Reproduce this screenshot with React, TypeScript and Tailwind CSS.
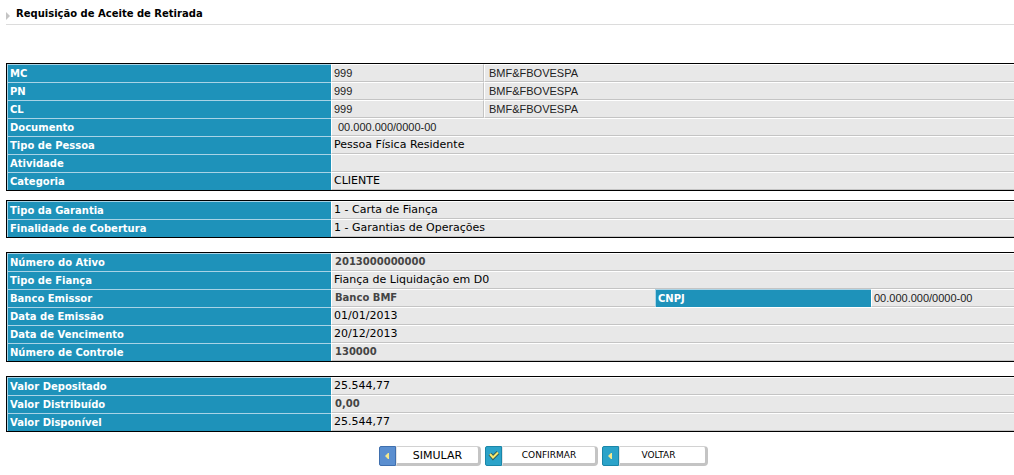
import type { ReactNode } from 'react';

type Tone = 'default' | 'masked' | 'maskedIndent' | 'maskedBold';

interface Field {
  label: string;
  value?: string;
  tone?: Tone;
}

const toneStyles: Record<Tone, string> = {
  default: 'px-[2px] text-[11px] text-black',
  masked: 'px-[2px] font-["Liberation_Sans",Arial,sans-serif] text-[11px] text-[#222]',
  maskedIndent: 'px-1.5 font-["Liberation_Sans",Arial,sans-serif] text-[11px] text-[#222]',
  maskedBold: 'px-[3px] text-[10px] font-bold text-[#444]',
};

const participants = [
  { label: 'MC', code: '999', name: 'BMF&FBOVESPA' },
  { label: 'PN', code: '999', name: 'BMF&FBOVESPA' },
  { label: 'CL', code: '999', name: 'BMF&FBOVESPA' },
];

const personFields: Field[] = [
  { label: 'Documento', value: '00.000.000/0000-00', tone: 'maskedIndent' },
  { label: 'Tipo de Pessoa', value: 'Pessoa Física Residente' },
  { label: 'Atividade' },
  { label: 'Categoria', value: 'CLIENTE' },
];

const guaranteeFields: Field[] = [
  { label: 'Tipo da Garantia', value: '1 - Carta de Fiança' },
  { label: 'Finalidade de Cobertura', value: '1 - Garantias de Operações' },
];

const assetFields: Field[] = [
  { label: 'Número do Ativo', value: '2013000000000', tone: 'maskedBold' },
  { label: 'Tipo de Fiança', value: 'Fiança de Liquidação em D0' },
];

const dateFields: Field[] = [
  { label: 'Data de Emissão', value: '01/01/2013' },
  { label: 'Data de Vencimento', value: '20/12/2013' },
  { label: 'Número de Controle', value: '130000', tone: 'maskedBold' },
];

const amountFields: Field[] = [
  { label: 'Valor Depositado', value: '25.544,77' },
  { label: 'Valor Distribuído', value: '0,00', tone: 'maskedBold' },
  { label: 'Valor Disponível', value: '25.544,77' },
];

function LabelCell({ children }: { children: ReactNode }) {
  return (
    <th
      scope="row"
      className="h-[18px] border-t border-l border-[#a9d3e6] bg-[#1e92ba] p-0 pl-[2px] text-left text-[10px] leading-4 font-bold text-white"
    >
      {children}
    </th>
  );
}

interface ValueCellProps {
  children?: ReactNode;
  tone?: Tone;
  colSpan?: number;
  divided?: boolean;
}

function ValueCell({ children, tone = 'default', colSpan, divided = false }: ValueCellProps) {
  return (
    <td
      colSpan={colSpan}
      className={`h-[18px] border-t border-b border-l border-t-white border-b-[#c4c4c4] border-l-white bg-[#e8e8e8] py-0 leading-4 ${
        divided ? 'border-r border-r-[#c4c4c4]' : ''
      } ${toneStyles[tone]}`}
    >
      {children}
    </td>
  );
}

function FieldRow({ field, colSpan }: { field: Field; colSpan?: number }) {
  return (
    <tr>
      <LabelCell>{field.label}</LabelCell>
      <ValueCell tone={field.tone} colSpan={colSpan}>
        {field.value}
      </ValueCell>
    </tr>
  );
}

function DataTable({ children }: { children: ReactNode }) {
  return (
    <table className="w-full table-fixed border-separate border-spacing-0 border-y border-l border-black whitespace-nowrap">
      {children}
    </table>
  );
}

function ArrowIcon() {
  return (
    <svg width="17" height="20" viewBox="0 0 17 20" aria-hidden="true">
      <path d="M6 10 L9 7 H10 V13 H9 Z" fill="#f6e98c" />
    </svg>
  );
}

function CheckIcon() {
  return (
    <svg width="17" height="20" viewBox="0 0 17 20" aria-hidden="true">
      <path d="M5 8 L8 11.500 L13 6.500" fill="none" stroke="#2f5f5c" strokeWidth="4" />
      <path d="M5 8 L8 11.500 L13 6.500" fill="none" stroke="#f7e86f" strokeWidth="2" />
    </svg>
  );
}

interface ActionButtonProps {
  icon: ReactNode;
  iconClass: string;
  labelClass: string;
  children: ReactNode;
}

function ActionButton({ icon, iconClass, labelClass, children }: ActionButtonProps) {
  return (
    <button type="button" className="flex h-5 cursor-pointer items-stretch">
      <span className={`block w-[17px] rounded-l-xs border ${iconClass}`}>
        <span className="-m-px block">{icon}</span>
      </span>
      <span
        className={`flex items-center justify-center rounded-r-sm border-t border-r-3 border-b-3 border-l border-t-[#d2d2d2] border-r-[#c4c4c4] border-b-[#c4c4c4] border-l-[#e4e4e4] bg-white pt-0.5 text-black ${labelClass}`}
      >
        {children}
      </span>
    </button>
  );
}

export default function App() {
  return (
    <main className="overflow-hidden bg-white pl-1.5 font-['DejaVu_Sans',Verdana,sans-serif]">
      <header className="mb-[38px] flex h-[25px] items-center border-b border-[#dcdcdc] pt-1">
        <svg width="4" height="8" viewBox="0 0 4 8" className="mt-1 mr-1.5" aria-hidden="true">
          <path d="M0 0 L4 4 L0 8 Z" fill="#c4c4c4" />
        </svg>
        <h1 className="text-[10px] leading-4 font-bold text-black">Requisição de Aceite de Retirada</h1>
      </header>

      <DataTable>
        <colgroup>
          <col className="w-81" />
          <col className="w-[153px]" />
          <col />
        </colgroup>
        <tbody>
          {participants.map((item) => (
            <tr key={item.label}>
              <LabelCell>{item.label}</LabelCell>
              <ValueCell tone="masked" divided>
                {item.code}
              </ValueCell>
              <ValueCell tone="masked">
                <span className="pl-0.5">{item.name}</span>
              </ValueCell>
            </tr>
          ))}
          {personFields.map((field) => (
            <FieldRow key={field.label} field={field} colSpan={2} />
          ))}
        </tbody>
      </DataTable>

      <div className="mt-[9px]">
        <DataTable>
          <colgroup>
            <col className="w-81" />
            <col />
          </colgroup>
          <tbody>
            {guaranteeFields.map((field) => (
              <FieldRow key={field.label} field={field} />
            ))}
          </tbody>
        </DataTable>
      </div>

      <div className="mt-3.5">
        <DataTable>
          <colgroup>
            <col className="w-81" />
            <col className="w-81" />
            <col className="w-54" />
            <col />
          </colgroup>
          <tbody>
            {assetFields.map((field) => (
              <FieldRow key={field.label} field={field} colSpan={3} />
            ))}
            <tr>
              <LabelCell>Banco Emissor</LabelCell>
              <ValueCell tone="maskedBold">Banco BMF</ValueCell>
              <LabelCell>CNPJ</LabelCell>
              <ValueCell tone="masked">00.000.000/0000-00</ValueCell>
            </tr>
            {dateFields.map((field) => (
              <FieldRow key={field.label} field={field} colSpan={3} />
            ))}
          </tbody>
        </DataTable>
      </div>

      <div className="mt-3.5">
        <DataTable>
          <colgroup>
            <col className="w-81" />
            <col />
          </colgroup>
          <tbody>
            {amountFields.map((field) => (
              <FieldRow key={field.label} field={field} />
            ))}
          </tbody>
        </DataTable>
      </div>

      {/* Actions */}
      <div className="mt-3.5 flex justify-center gap-1 pl-[67px]">
        <ActionButton
          icon={<ArrowIcon />}
          iconClass="border-[#3f6fae] bg-[#5b8fd0]"
          labelClass="w-[85px] text-[11px]"
        >
          SIMULAR
        </ActionButton>
        <ActionButton
          icon={<CheckIcon />}
          iconClass="border-[#1b86a8] bg-[#2ba3c9]"
          labelClass="w-24 text-[9px]"
        >
          CONFIRMAR
        </ActionButton>
        <ActionButton
          icon={<ArrowIcon />}
          iconClass="border-[#1b86a8] bg-[#2ba3c9]"
          labelClass="w-[89px] pr-2 text-[9px]"
        >
          VOLTAR
        </ActionButton>
      </div>
    </main>
  );
}
